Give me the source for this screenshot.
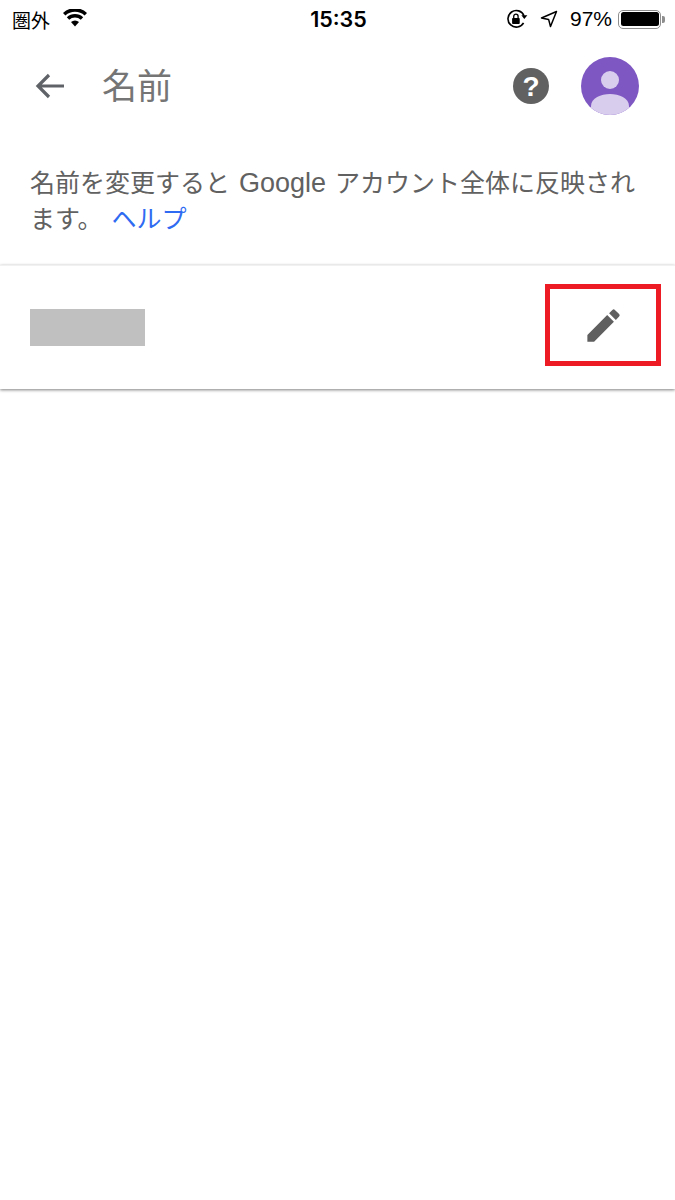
<div class="page">
	<div class="status">
		<div class="status-left">
			<span class="carrier">圏外</span>
			<svg class="wifi" width="26" height="18" viewBox="0 0 26 18">
				<path d="M13 17.5 L9 13 A6 6 0 0 1 17 13 Z" fill="#000" />
				<path d="M7.2 10.8 L4.8 8.2 A12 12 0 0 1 21.2 8.2 L18.8 10.8 A8.6 8.6 0 0 0 7.2 10.8 Z" fill="#000" />
				<path d="M3.4 6.4 L1 3.9 A17.6 17.6 0 0 1 25 3.9 L22.6 6.4 A14.2 14.2 0 0 0 3.4 6.4 Z" fill="#000" />
			</svg>
		</div>
		<span class="time">15:35</span>
		<div class="status-right">
			<svg width="24" height="22" viewBox="0 0 22 20">
				<path d="M17 13.5 A7.6 7.6 0 1 1 17.4 7" fill="none" stroke="#000" stroke-width="1.5" />
				<path d="M15 6.5 H20.5 L17.7 10 Z" fill="#000" />
				<rect x="6.5" y="9" width="7" height="5.5" rx="0.8" fill="#000" />
				<path d="M8 9 V7.5 A2 2 0 0 1 12 7.5 V9" fill="none" stroke="#000" stroke-width="1.2" />
			</svg>
			<svg class="arrow" width="18" height="18" viewBox="0 0 18 18">
				<path d="M16.5 1.5 L1.5 8 L8.6 9.4 L10.5 16.5 Z" fill="none" stroke="#000" stroke-width="1.5" stroke-linejoin="round" />
			</svg>
			<span class="pct">97%</span>
			<div class="battery"><div class="battery-fill"></div></div>
			<div class="battery-tip"></div>
		</div>
	</div>

	<header class="topbar">
		<svg class="back" width="32" height="28" viewBox="0 0 32 28">
			<path d="M30 14 H4 M15 3 L4 14 L15 25" fill="none" stroke="#5f6368" stroke-width="3.2" />
		</svg>
		<h1>名前</h1>
		<svg class="help" width="36" height="36" viewBox="0 0 36 36">
			<circle cx="18" cy="18" r="18" fill="#616161" />
			<text x="18" y="28" text-anchor="middle" class="q">?</text>
		</svg>
		<svg class="avatar" width="58" height="58" viewBox="0 0 58 58">
			<defs>
				<clipPath id="avatar-clip"><circle cx="29" cy="29" r="29" /></clipPath>
			</defs>
			<circle cx="29" cy="29" r="29" fill="#7e57c2" />
			<circle cx="29" cy="23" r="9" fill="#d9cdee" />
			<path d="M10 58 V49 C10 41 20 37 29 37 C38 37 48 41 48 49 V58 Z" fill="#d9cdee" clip-path="url(#avatar-clip)" />
		</svg>
	</header>

	<p class="intro">名前を変更すると <span class="latin">Google</span> アカウント全体に反映されます。 <a href="#help">ヘルプ</a></p>

	<section class="card">
		<div class="redacted"></div>
		<button class="edit" aria-label="編集">
			<svg width="43" height="43" viewBox="0 0 24 24">
				<path fill="#5f5f5f" d="M3 17.25V21h3.75L17.81 9.94l-3.75-3.75L3 17.25zM20.71 7.04a1 1 0 0 0 0-1.41l-2.34-2.34a1 1 0 0 0-1.41 0l-1.83 1.83 3.75 3.75 1.83-1.83z" />
			</svg>
		</button>
	</section>
</div>

<style>
	:global(body) {
		margin: 0;
		background: #fff;
	}
	.page {
		width: 675px;
		height: 1200px;
		overflow: hidden;
		background: #fff;
		font-family: "Liberation Sans", "Noto Sans CJK JP", sans-serif;
	}
	.status {
		height: 38px;
		display: grid;
		grid-template-columns: 1fr auto 1fr;
		align-items: center;
		padding: 0 10px 0 12px;
		color: #000;
	}
	.status-left {
		display: flex;
		align-items: center;
		gap: 12px;
	}
	.carrier {
		font-size: 19px;
	}
	.wifi {
		margin-top: -2px;
	}
	.time {
		font-family: Inter, "Liberation Sans", sans-serif;
		font-size: 21.5px;
		font-weight: 600;
	}
	.status-right {
		display: flex;
		align-items: center;
		justify-content: flex-end;
	}
	.arrow {
		margin-left: 11px;
	}
	.pct {
		font-size: 21px;
		margin-left: 12px;
		margin-right: 6px;
	}
	.battery {
		width: 43px;
		height: 19px;
		box-sizing: border-box;
		border: 1.5px solid #8e8e8e;
		border-radius: 5px;
		padding: 1.5px;
	}
	.battery-fill {
		height: 100%;
		background: #000;
		border-radius: 2.5px;
	}
	.battery-tip {
		width: 3px;
		height: 7px;
		margin-left: 1px;
		background: #8e8e8e;
		border-radius: 0 2px 2px 0;
	}
	.topbar {
		height: 96px;
		display: flex;
		align-items: center;
		padding: 0 36px 0 34px;
	}
	.back {
		flex: none;
	}
	h1 {
		flex: 1;
		margin: -5px 0 0 36px;
		font-size: 35px;
		font-weight: 400;
		color: #757575;
	}
	.help {
		margin-right: 32px;
	}
	.q {
		font-family: "Liberation Sans", sans-serif;
		font-size: 28px;
		font-weight: 700;
		fill: #fff;
	}
	.intro {
		margin: 0;
		padding: 31px 30px 28px;
		font-size: 25px;
		line-height: 36px;
		word-spacing: 2px;
		color: #616161;
	}
	.latin {
		font-size: 27px;
	}
	.intro a {
		color: #2f6bf2;
		text-decoration: none;
	}
	.card {
		height: 124px;
		box-sizing: border-box;
		border-top: 1px solid #f1f1f1;
		box-shadow: 0 1px 3px rgba(0, 0, 0, 0.5);
		display: flex;
		align-items: center;
		justify-content: space-between;
		padding: 0 14px 0 30px;
		position: relative;
	}
	.redacted {
		width: 115px;
		height: 37px;
		background: #c0c0c0;
	}
	.edit {
		width: 116px;
		height: 82px;
		margin-top: -5px;
		box-sizing: border-box;
		border: 5px solid #ed1c24;
		background: none;
		padding: 0;
		display: flex;
		align-items: center;
		justify-content: center;
	}
</style>
